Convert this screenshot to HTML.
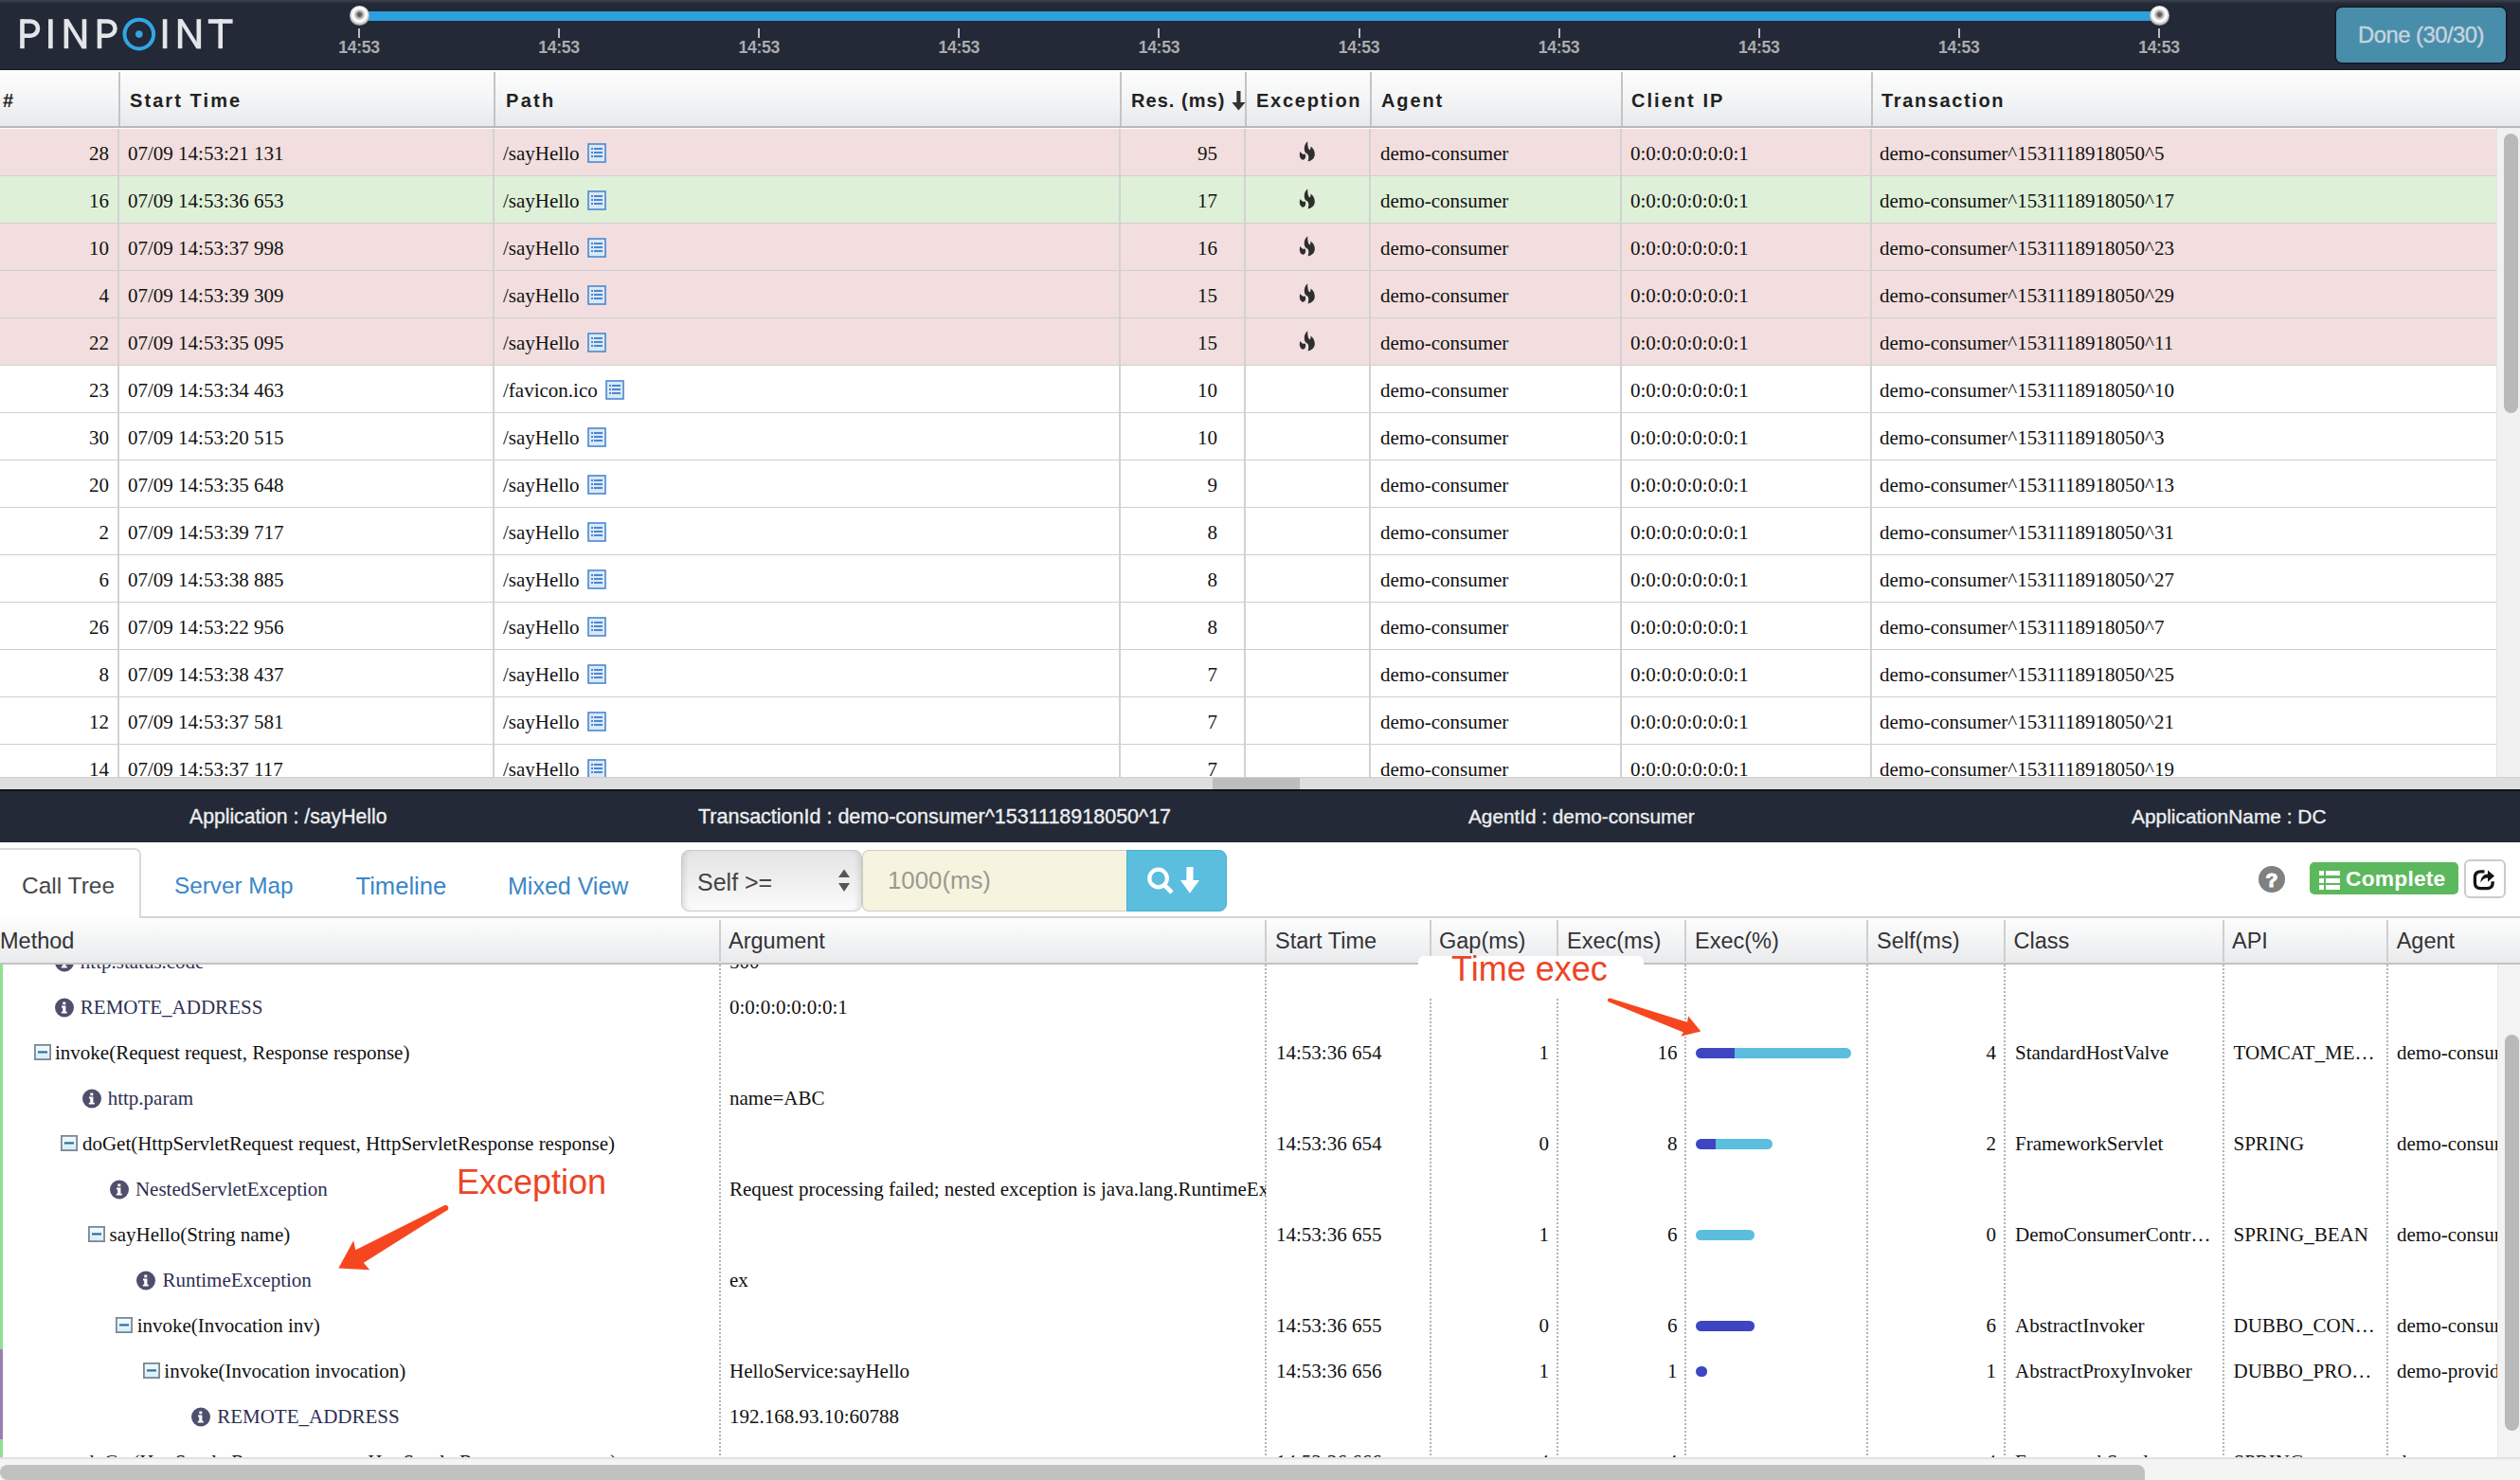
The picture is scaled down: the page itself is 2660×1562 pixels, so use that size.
<!DOCTYPE html><html><head><meta charset="utf-8"><style>

*{margin:0;padding:0;box-sizing:border-box}
html,body{width:2660px;height:1562px;overflow:hidden;background:#fff}
body{position:relative;font-family:"Liberation Sans",sans-serif}
.abs{position:absolute}
.top{left:0;top:0;width:2660px;height:74px;background:#232936;border-bottom:1px solid #151922}
.tick{position:absolute;top:30px;width:2px;height:10px;background:#b9bcc2}
.tlab{position:absolute;top:40.3px;width:80px;margin-left:-40px;text-align:center;color:#a9abae;font-weight:700;font-size:17.6px;letter-spacing:-0.3px}
.handle{position:absolute;top:5.5px;width:21px;height:21px;border-radius:50%;background:radial-gradient(circle at 50% 45%,#555 0,#666 2px,#aaa 3.5px,#f4f4f4 6px,#fff 7.5px,#ddd 9px,#aaa 10.5px)}
.th{position:absolute;top:74px;height:61px;left:0;width:2660px;background:linear-gradient(#fdfdfd 0%,#f4f5f6 50%,#e8e9eb 100%);border-bottom:2px solid #b8b8b8}
.thc{position:absolute;top:3px;height:59px;line-height:59px;font-weight:700;font-size:20px;color:#222;letter-spacing:1.9px}
.thsep{position:absolute;top:2px;height:57px;width:2px;background:#c4c4c4}
.row{position:absolute;left:0;width:2635px;height:50px;border-bottom:1.5px solid #cfcfcf;font-family:"Liberation Serif",serif;font-size:21px;color:#111}
.cell{position:absolute;top:0;height:50px;line-height:52px;white-space:nowrap}
.vsep{position:absolute;top:0;height:50px;width:1.5px;background:#d2d2d2}
.pink{background:#f2dede}
.green{background:#dff0d8}

</style></head><body>
<div class="abs top">
<div class="abs" style="left:0;top:0;width:2660px;height:4px;background:linear-gradient(#3a3f4b,#232936)"></div>
<svg class="abs" style="left:0;top:0" width="260" height="74" viewBox="0 0 260 74">
<g fill="#e4e5e8">
<rect x="21.2" y="20.2" width="4.6" height="31"/>
<rect x="51.1" y="20.2" width="4.6" height="31"/>
<rect x="67.6" y="20.2" width="4.6" height="31"/><rect x="86.7" y="20.2" width="4.6" height="31"/><polygon points="67.6,20.2 72.4,20.2 91.3,51.2 86.5,51.2"/>
<rect x="102.7" y="20.2" width="4.6" height="31"/>
<rect x="171.8" y="20.2" width="4.6" height="31"/>
<rect x="187.8" y="20.2" width="4.6" height="31"/><rect x="207.5" y="20.2" width="4.6" height="31"/><polygon points="187.8,20.2 192.6,20.2 212.1,51.2 207.3,51.2"/>
<rect x="219.8" y="20.2" width="25.8" height="4.6"/><rect x="230.4" y="20.2" width="4.6" height="31"/>
</g>
<g fill="none" stroke="#e4e5e8" stroke-width="4.6">
<path d="M23.5 22.5 H32.4 A7.6 7.6 0 0 1 32.4 37.7 H23.5"/>
<path d="M105 22.5 H113.9 A7.6 7.6 0 0 1 113.9 37.7 H105"/>
</g>
<circle cx="146.8" cy="36.1" r="15.3" fill="none" stroke="#2fa7e4" stroke-width="4"/>
<circle cx="146.8" cy="36.1" r="3.8" fill="#2fa7e4"/>
</svg>
<div class="abs" style="left:379px;top:12px;width:1900px;height:10px;background:#2d9fdc"></div>
<div class="tick" style="left:378.0px"></div><div class="tlab" style="left:379.0px">14:53</div>
<div class="tick" style="left:589.1px"></div><div class="tlab" style="left:590.1px">14:53</div>
<div class="tick" style="left:800.2px"></div><div class="tlab" style="left:801.2px">14:53</div>
<div class="tick" style="left:1011.3px"></div><div class="tlab" style="left:1012.3px">14:53</div>
<div class="tick" style="left:1222.4px"></div><div class="tlab" style="left:1223.4px">14:53</div>
<div class="tick" style="left:1433.5px"></div><div class="tlab" style="left:1434.5px">14:53</div>
<div class="tick" style="left:1644.6px"></div><div class="tlab" style="left:1645.6px">14:53</div>
<div class="tick" style="left:1855.7px"></div><div class="tlab" style="left:1856.7px">14:53</div>
<div class="tick" style="left:2066.8px"></div><div class="tlab" style="left:2067.8px">14:53</div>
<div class="tick" style="left:2277.9px"></div><div class="tlab" style="left:2278.9px">14:53</div>
<div class="handle" style="left:369px"></div>
<div class="handle" style="left:2269px"></div>
<div class="abs" style="left:2466px;top:7.5px;width:179px;height:58px;border-radius:6px;background:#488eab;box-shadow:0 0 0 1.5px #131926;color:#c6d3de;font-size:23.8px;text-align:center;line-height:57px;letter-spacing:-0.5px;-webkit-text-stroke:0.4px #c6d3de">Done (30/30)</div>
</div>
<div class="th">
<div class="thc" style="left:3px;letter-spacing:0px">#</div>
<div class="thc" style="left:137px;letter-spacing:2.08px">Start Time</div>
<div class="thc" style="left:534px;letter-spacing:2.33px">Path</div>
<div class="thc" style="left:1194px;letter-spacing:1.05px">Res. (ms)</div>
<div class="thc" style="left:1326px;letter-spacing:1.75px">Exception</div>
<div class="thc" style="left:1458px;letter-spacing:1.9px">Agent</div>
<div class="thc" style="left:1722px;letter-spacing:2.04px">Client IP</div>
<div class="thc" style="left:1986px;letter-spacing:1.63px">Transaction</div>
<div class="thsep" style="left:125px"></div>
<div class="thsep" style="left:521px"></div>
<div class="thsep" style="left:1182px"></div>
<div class="thsep" style="left:1314px"></div>
<div class="thsep" style="left:1446px"></div>
<div class="thsep" style="left:1711px"></div>
<div class="thsep" style="left:1975px"></div>
<svg class="abs" style="left:1300px;top:22px" width="15" height="21" viewBox="0 0 15 21"><path d="M5.3 0 H9.5 V12 H14.5 L7.4 20.5 L0.3 12 H5.3 Z" fill="#333"/></svg>
</div>
<div class="abs" style="left:0;top:136px;width:2660px;height:684px;overflow:hidden">
<div class="row pink" style="top:0px">
<div class="cell" style="right:2520px">28</div>
<div class="cell" style="left:135px">07/09 14:53:21 131</div>
<div class="cell" style="left:531px">/sayHello</div>
<svg width="20" height="21" viewBox="0 0 20 21" style="position:absolute;top:15px;left:620px"><rect x="1" y="1" width="18" height="19" fill="#dbe8f7" stroke="#4a88cf" stroke-width="1.6"/><g fill="#4a88cf"><rect x="4" y="5" width="2" height="2"/><rect x="7" y="5" width="9" height="2"/><rect x="4" y="9" width="2" height="2"/><rect x="7" y="9" width="9" height="2"/><rect x="4" y="13" width="2" height="2"/><rect x="7" y="13" width="9" height="2"/></g></svg>
<div class="cell" style="right:1350px">95</div>
<svg width="18" height="22" viewBox="0 0 18 22" style="position:absolute;top:13px;left:1370.8px"><path fill="#2e2e2e" d="M1.4 11 C0.4 13.5 0.6 17 2.4 18.8 C3.8 20.1 5.6 19.9 6.6 18.3 C7.4 16.9 7.3 15 6.7 13.6 C5.6 14.1 4.1 13.8 3.2 12.9 C2.5 12.3 1.9 11.7 1.4 11 Z"/><path fill="#2e2e2e" d="M9.3 0.3 C6.2 2.8 5.2 6.5 6 10 C6.6 12.2 7.9 12.8 9 13.5 C10.3 14.5 10.9 17 9.6 21.4 C13.6 20.8 16.6 18 16.8 14 C17 10.3 15.1 7.3 12.4 5.4 C12.7 7.3 12.3 8.6 11.3 9.4 C9.6 7.6 9 4 9.3 0.3 Z"/></svg>
<div class="cell" style="left:1457px">demo-consumer</div>
<div class="cell" style="left:1721px">0:0:0:0:0:0:0:1</div>
<div class="cell" style="left:1984px">demo-consumer^1531118918050^5</div>
<div class="vsep" style="left:124.3px"></div>
<div class="vsep" style="left:520.3px"></div>
<div class="vsep" style="left:1181.3px"></div>
<div class="vsep" style="left:1313.3px"></div>
<div class="vsep" style="left:1445.3px"></div>
<div class="vsep" style="left:1710.3px"></div>
<div class="vsep" style="left:1974.3px"></div>
</div>
<div class="row green" style="top:50px">
<div class="cell" style="right:2520px">16</div>
<div class="cell" style="left:135px">07/09 14:53:36 653</div>
<div class="cell" style="left:531px">/sayHello</div>
<svg width="20" height="21" viewBox="0 0 20 21" style="position:absolute;top:15px;left:620px"><rect x="1" y="1" width="18" height="19" fill="#dbe8f7" stroke="#4a88cf" stroke-width="1.6"/><g fill="#4a88cf"><rect x="4" y="5" width="2" height="2"/><rect x="7" y="5" width="9" height="2"/><rect x="4" y="9" width="2" height="2"/><rect x="7" y="9" width="9" height="2"/><rect x="4" y="13" width="2" height="2"/><rect x="7" y="13" width="9" height="2"/></g></svg>
<div class="cell" style="right:1350px">17</div>
<svg width="18" height="22" viewBox="0 0 18 22" style="position:absolute;top:13px;left:1370.8px"><path fill="#2e2e2e" d="M1.4 11 C0.4 13.5 0.6 17 2.4 18.8 C3.8 20.1 5.6 19.9 6.6 18.3 C7.4 16.9 7.3 15 6.7 13.6 C5.6 14.1 4.1 13.8 3.2 12.9 C2.5 12.3 1.9 11.7 1.4 11 Z"/><path fill="#2e2e2e" d="M9.3 0.3 C6.2 2.8 5.2 6.5 6 10 C6.6 12.2 7.9 12.8 9 13.5 C10.3 14.5 10.9 17 9.6 21.4 C13.6 20.8 16.6 18 16.8 14 C17 10.3 15.1 7.3 12.4 5.4 C12.7 7.3 12.3 8.6 11.3 9.4 C9.6 7.6 9 4 9.3 0.3 Z"/></svg>
<div class="cell" style="left:1457px">demo-consumer</div>
<div class="cell" style="left:1721px">0:0:0:0:0:0:0:1</div>
<div class="cell" style="left:1984px">demo-consumer^1531118918050^17</div>
<div class="vsep" style="left:124.3px"></div>
<div class="vsep" style="left:520.3px"></div>
<div class="vsep" style="left:1181.3px"></div>
<div class="vsep" style="left:1313.3px"></div>
<div class="vsep" style="left:1445.3px"></div>
<div class="vsep" style="left:1710.3px"></div>
<div class="vsep" style="left:1974.3px"></div>
</div>
<div class="row pink" style="top:100px">
<div class="cell" style="right:2520px">10</div>
<div class="cell" style="left:135px">07/09 14:53:37 998</div>
<div class="cell" style="left:531px">/sayHello</div>
<svg width="20" height="21" viewBox="0 0 20 21" style="position:absolute;top:15px;left:620px"><rect x="1" y="1" width="18" height="19" fill="#dbe8f7" stroke="#4a88cf" stroke-width="1.6"/><g fill="#4a88cf"><rect x="4" y="5" width="2" height="2"/><rect x="7" y="5" width="9" height="2"/><rect x="4" y="9" width="2" height="2"/><rect x="7" y="9" width="9" height="2"/><rect x="4" y="13" width="2" height="2"/><rect x="7" y="13" width="9" height="2"/></g></svg>
<div class="cell" style="right:1350px">16</div>
<svg width="18" height="22" viewBox="0 0 18 22" style="position:absolute;top:13px;left:1370.8px"><path fill="#2e2e2e" d="M1.4 11 C0.4 13.5 0.6 17 2.4 18.8 C3.8 20.1 5.6 19.9 6.6 18.3 C7.4 16.9 7.3 15 6.7 13.6 C5.6 14.1 4.1 13.8 3.2 12.9 C2.5 12.3 1.9 11.7 1.4 11 Z"/><path fill="#2e2e2e" d="M9.3 0.3 C6.2 2.8 5.2 6.5 6 10 C6.6 12.2 7.9 12.8 9 13.5 C10.3 14.5 10.9 17 9.6 21.4 C13.6 20.8 16.6 18 16.8 14 C17 10.3 15.1 7.3 12.4 5.4 C12.7 7.3 12.3 8.6 11.3 9.4 C9.6 7.6 9 4 9.3 0.3 Z"/></svg>
<div class="cell" style="left:1457px">demo-consumer</div>
<div class="cell" style="left:1721px">0:0:0:0:0:0:0:1</div>
<div class="cell" style="left:1984px">demo-consumer^1531118918050^23</div>
<div class="vsep" style="left:124.3px"></div>
<div class="vsep" style="left:520.3px"></div>
<div class="vsep" style="left:1181.3px"></div>
<div class="vsep" style="left:1313.3px"></div>
<div class="vsep" style="left:1445.3px"></div>
<div class="vsep" style="left:1710.3px"></div>
<div class="vsep" style="left:1974.3px"></div>
</div>
<div class="row pink" style="top:150px">
<div class="cell" style="right:2520px">4</div>
<div class="cell" style="left:135px">07/09 14:53:39 309</div>
<div class="cell" style="left:531px">/sayHello</div>
<svg width="20" height="21" viewBox="0 0 20 21" style="position:absolute;top:15px;left:620px"><rect x="1" y="1" width="18" height="19" fill="#dbe8f7" stroke="#4a88cf" stroke-width="1.6"/><g fill="#4a88cf"><rect x="4" y="5" width="2" height="2"/><rect x="7" y="5" width="9" height="2"/><rect x="4" y="9" width="2" height="2"/><rect x="7" y="9" width="9" height="2"/><rect x="4" y="13" width="2" height="2"/><rect x="7" y="13" width="9" height="2"/></g></svg>
<div class="cell" style="right:1350px">15</div>
<svg width="18" height="22" viewBox="0 0 18 22" style="position:absolute;top:13px;left:1370.8px"><path fill="#2e2e2e" d="M1.4 11 C0.4 13.5 0.6 17 2.4 18.8 C3.8 20.1 5.6 19.9 6.6 18.3 C7.4 16.9 7.3 15 6.7 13.6 C5.6 14.1 4.1 13.8 3.2 12.9 C2.5 12.3 1.9 11.7 1.4 11 Z"/><path fill="#2e2e2e" d="M9.3 0.3 C6.2 2.8 5.2 6.5 6 10 C6.6 12.2 7.9 12.8 9 13.5 C10.3 14.5 10.9 17 9.6 21.4 C13.6 20.8 16.6 18 16.8 14 C17 10.3 15.1 7.3 12.4 5.4 C12.7 7.3 12.3 8.6 11.3 9.4 C9.6 7.6 9 4 9.3 0.3 Z"/></svg>
<div class="cell" style="left:1457px">demo-consumer</div>
<div class="cell" style="left:1721px">0:0:0:0:0:0:0:1</div>
<div class="cell" style="left:1984px">demo-consumer^1531118918050^29</div>
<div class="vsep" style="left:124.3px"></div>
<div class="vsep" style="left:520.3px"></div>
<div class="vsep" style="left:1181.3px"></div>
<div class="vsep" style="left:1313.3px"></div>
<div class="vsep" style="left:1445.3px"></div>
<div class="vsep" style="left:1710.3px"></div>
<div class="vsep" style="left:1974.3px"></div>
</div>
<div class="row pink" style="top:200px">
<div class="cell" style="right:2520px">22</div>
<div class="cell" style="left:135px">07/09 14:53:35 095</div>
<div class="cell" style="left:531px">/sayHello</div>
<svg width="20" height="21" viewBox="0 0 20 21" style="position:absolute;top:15px;left:620px"><rect x="1" y="1" width="18" height="19" fill="#dbe8f7" stroke="#4a88cf" stroke-width="1.6"/><g fill="#4a88cf"><rect x="4" y="5" width="2" height="2"/><rect x="7" y="5" width="9" height="2"/><rect x="4" y="9" width="2" height="2"/><rect x="7" y="9" width="9" height="2"/><rect x="4" y="13" width="2" height="2"/><rect x="7" y="13" width="9" height="2"/></g></svg>
<div class="cell" style="right:1350px">15</div>
<svg width="18" height="22" viewBox="0 0 18 22" style="position:absolute;top:13px;left:1370.8px"><path fill="#2e2e2e" d="M1.4 11 C0.4 13.5 0.6 17 2.4 18.8 C3.8 20.1 5.6 19.9 6.6 18.3 C7.4 16.9 7.3 15 6.7 13.6 C5.6 14.1 4.1 13.8 3.2 12.9 C2.5 12.3 1.9 11.7 1.4 11 Z"/><path fill="#2e2e2e" d="M9.3 0.3 C6.2 2.8 5.2 6.5 6 10 C6.6 12.2 7.9 12.8 9 13.5 C10.3 14.5 10.9 17 9.6 21.4 C13.6 20.8 16.6 18 16.8 14 C17 10.3 15.1 7.3 12.4 5.4 C12.7 7.3 12.3 8.6 11.3 9.4 C9.6 7.6 9 4 9.3 0.3 Z"/></svg>
<div class="cell" style="left:1457px">demo-consumer</div>
<div class="cell" style="left:1721px">0:0:0:0:0:0:0:1</div>
<div class="cell" style="left:1984px">demo-consumer^1531118918050^11</div>
<div class="vsep" style="left:124.3px"></div>
<div class="vsep" style="left:520.3px"></div>
<div class="vsep" style="left:1181.3px"></div>
<div class="vsep" style="left:1313.3px"></div>
<div class="vsep" style="left:1445.3px"></div>
<div class="vsep" style="left:1710.3px"></div>
<div class="vsep" style="left:1974.3px"></div>
</div>
<div class="row " style="top:250px">
<div class="cell" style="right:2520px">23</div>
<div class="cell" style="left:135px">07/09 14:53:34 463</div>
<div class="cell" style="left:531px">/favicon.ico</div>
<svg width="20" height="21" viewBox="0 0 20 21" style="position:absolute;top:15px;left:639px"><rect x="1" y="1" width="18" height="19" fill="#dbe8f7" stroke="#4a88cf" stroke-width="1.6"/><g fill="#4a88cf"><rect x="4" y="5" width="2" height="2"/><rect x="7" y="5" width="9" height="2"/><rect x="4" y="9" width="2" height="2"/><rect x="7" y="9" width="9" height="2"/><rect x="4" y="13" width="2" height="2"/><rect x="7" y="13" width="9" height="2"/></g></svg>
<div class="cell" style="right:1350px">10</div>
<div class="cell" style="left:1457px">demo-consumer</div>
<div class="cell" style="left:1721px">0:0:0:0:0:0:0:1</div>
<div class="cell" style="left:1984px">demo-consumer^1531118918050^10</div>
<div class="vsep" style="left:124.3px"></div>
<div class="vsep" style="left:520.3px"></div>
<div class="vsep" style="left:1181.3px"></div>
<div class="vsep" style="left:1313.3px"></div>
<div class="vsep" style="left:1445.3px"></div>
<div class="vsep" style="left:1710.3px"></div>
<div class="vsep" style="left:1974.3px"></div>
</div>
<div class="row " style="top:300px">
<div class="cell" style="right:2520px">30</div>
<div class="cell" style="left:135px">07/09 14:53:20 515</div>
<div class="cell" style="left:531px">/sayHello</div>
<svg width="20" height="21" viewBox="0 0 20 21" style="position:absolute;top:15px;left:620px"><rect x="1" y="1" width="18" height="19" fill="#dbe8f7" stroke="#4a88cf" stroke-width="1.6"/><g fill="#4a88cf"><rect x="4" y="5" width="2" height="2"/><rect x="7" y="5" width="9" height="2"/><rect x="4" y="9" width="2" height="2"/><rect x="7" y="9" width="9" height="2"/><rect x="4" y="13" width="2" height="2"/><rect x="7" y="13" width="9" height="2"/></g></svg>
<div class="cell" style="right:1350px">10</div>
<div class="cell" style="left:1457px">demo-consumer</div>
<div class="cell" style="left:1721px">0:0:0:0:0:0:0:1</div>
<div class="cell" style="left:1984px">demo-consumer^1531118918050^3</div>
<div class="vsep" style="left:124.3px"></div>
<div class="vsep" style="left:520.3px"></div>
<div class="vsep" style="left:1181.3px"></div>
<div class="vsep" style="left:1313.3px"></div>
<div class="vsep" style="left:1445.3px"></div>
<div class="vsep" style="left:1710.3px"></div>
<div class="vsep" style="left:1974.3px"></div>
</div>
<div class="row " style="top:350px">
<div class="cell" style="right:2520px">20</div>
<div class="cell" style="left:135px">07/09 14:53:35 648</div>
<div class="cell" style="left:531px">/sayHello</div>
<svg width="20" height="21" viewBox="0 0 20 21" style="position:absolute;top:15px;left:620px"><rect x="1" y="1" width="18" height="19" fill="#dbe8f7" stroke="#4a88cf" stroke-width="1.6"/><g fill="#4a88cf"><rect x="4" y="5" width="2" height="2"/><rect x="7" y="5" width="9" height="2"/><rect x="4" y="9" width="2" height="2"/><rect x="7" y="9" width="9" height="2"/><rect x="4" y="13" width="2" height="2"/><rect x="7" y="13" width="9" height="2"/></g></svg>
<div class="cell" style="right:1350px">9</div>
<div class="cell" style="left:1457px">demo-consumer</div>
<div class="cell" style="left:1721px">0:0:0:0:0:0:0:1</div>
<div class="cell" style="left:1984px">demo-consumer^1531118918050^13</div>
<div class="vsep" style="left:124.3px"></div>
<div class="vsep" style="left:520.3px"></div>
<div class="vsep" style="left:1181.3px"></div>
<div class="vsep" style="left:1313.3px"></div>
<div class="vsep" style="left:1445.3px"></div>
<div class="vsep" style="left:1710.3px"></div>
<div class="vsep" style="left:1974.3px"></div>
</div>
<div class="row " style="top:400px">
<div class="cell" style="right:2520px">2</div>
<div class="cell" style="left:135px">07/09 14:53:39 717</div>
<div class="cell" style="left:531px">/sayHello</div>
<svg width="20" height="21" viewBox="0 0 20 21" style="position:absolute;top:15px;left:620px"><rect x="1" y="1" width="18" height="19" fill="#dbe8f7" stroke="#4a88cf" stroke-width="1.6"/><g fill="#4a88cf"><rect x="4" y="5" width="2" height="2"/><rect x="7" y="5" width="9" height="2"/><rect x="4" y="9" width="2" height="2"/><rect x="7" y="9" width="9" height="2"/><rect x="4" y="13" width="2" height="2"/><rect x="7" y="13" width="9" height="2"/></g></svg>
<div class="cell" style="right:1350px">8</div>
<div class="cell" style="left:1457px">demo-consumer</div>
<div class="cell" style="left:1721px">0:0:0:0:0:0:0:1</div>
<div class="cell" style="left:1984px">demo-consumer^1531118918050^31</div>
<div class="vsep" style="left:124.3px"></div>
<div class="vsep" style="left:520.3px"></div>
<div class="vsep" style="left:1181.3px"></div>
<div class="vsep" style="left:1313.3px"></div>
<div class="vsep" style="left:1445.3px"></div>
<div class="vsep" style="left:1710.3px"></div>
<div class="vsep" style="left:1974.3px"></div>
</div>
<div class="row " style="top:450px">
<div class="cell" style="right:2520px">6</div>
<div class="cell" style="left:135px">07/09 14:53:38 885</div>
<div class="cell" style="left:531px">/sayHello</div>
<svg width="20" height="21" viewBox="0 0 20 21" style="position:absolute;top:15px;left:620px"><rect x="1" y="1" width="18" height="19" fill="#dbe8f7" stroke="#4a88cf" stroke-width="1.6"/><g fill="#4a88cf"><rect x="4" y="5" width="2" height="2"/><rect x="7" y="5" width="9" height="2"/><rect x="4" y="9" width="2" height="2"/><rect x="7" y="9" width="9" height="2"/><rect x="4" y="13" width="2" height="2"/><rect x="7" y="13" width="9" height="2"/></g></svg>
<div class="cell" style="right:1350px">8</div>
<div class="cell" style="left:1457px">demo-consumer</div>
<div class="cell" style="left:1721px">0:0:0:0:0:0:0:1</div>
<div class="cell" style="left:1984px">demo-consumer^1531118918050^27</div>
<div class="vsep" style="left:124.3px"></div>
<div class="vsep" style="left:520.3px"></div>
<div class="vsep" style="left:1181.3px"></div>
<div class="vsep" style="left:1313.3px"></div>
<div class="vsep" style="left:1445.3px"></div>
<div class="vsep" style="left:1710.3px"></div>
<div class="vsep" style="left:1974.3px"></div>
</div>
<div class="row " style="top:500px">
<div class="cell" style="right:2520px">26</div>
<div class="cell" style="left:135px">07/09 14:53:22 956</div>
<div class="cell" style="left:531px">/sayHello</div>
<svg width="20" height="21" viewBox="0 0 20 21" style="position:absolute;top:15px;left:620px"><rect x="1" y="1" width="18" height="19" fill="#dbe8f7" stroke="#4a88cf" stroke-width="1.6"/><g fill="#4a88cf"><rect x="4" y="5" width="2" height="2"/><rect x="7" y="5" width="9" height="2"/><rect x="4" y="9" width="2" height="2"/><rect x="7" y="9" width="9" height="2"/><rect x="4" y="13" width="2" height="2"/><rect x="7" y="13" width="9" height="2"/></g></svg>
<div class="cell" style="right:1350px">8</div>
<div class="cell" style="left:1457px">demo-consumer</div>
<div class="cell" style="left:1721px">0:0:0:0:0:0:0:1</div>
<div class="cell" style="left:1984px">demo-consumer^1531118918050^7</div>
<div class="vsep" style="left:124.3px"></div>
<div class="vsep" style="left:520.3px"></div>
<div class="vsep" style="left:1181.3px"></div>
<div class="vsep" style="left:1313.3px"></div>
<div class="vsep" style="left:1445.3px"></div>
<div class="vsep" style="left:1710.3px"></div>
<div class="vsep" style="left:1974.3px"></div>
</div>
<div class="row " style="top:550px">
<div class="cell" style="right:2520px">8</div>
<div class="cell" style="left:135px">07/09 14:53:38 437</div>
<div class="cell" style="left:531px">/sayHello</div>
<svg width="20" height="21" viewBox="0 0 20 21" style="position:absolute;top:15px;left:620px"><rect x="1" y="1" width="18" height="19" fill="#dbe8f7" stroke="#4a88cf" stroke-width="1.6"/><g fill="#4a88cf"><rect x="4" y="5" width="2" height="2"/><rect x="7" y="5" width="9" height="2"/><rect x="4" y="9" width="2" height="2"/><rect x="7" y="9" width="9" height="2"/><rect x="4" y="13" width="2" height="2"/><rect x="7" y="13" width="9" height="2"/></g></svg>
<div class="cell" style="right:1350px">7</div>
<div class="cell" style="left:1457px">demo-consumer</div>
<div class="cell" style="left:1721px">0:0:0:0:0:0:0:1</div>
<div class="cell" style="left:1984px">demo-consumer^1531118918050^25</div>
<div class="vsep" style="left:124.3px"></div>
<div class="vsep" style="left:520.3px"></div>
<div class="vsep" style="left:1181.3px"></div>
<div class="vsep" style="left:1313.3px"></div>
<div class="vsep" style="left:1445.3px"></div>
<div class="vsep" style="left:1710.3px"></div>
<div class="vsep" style="left:1974.3px"></div>
</div>
<div class="row " style="top:600px">
<div class="cell" style="right:2520px">12</div>
<div class="cell" style="left:135px">07/09 14:53:37 581</div>
<div class="cell" style="left:531px">/sayHello</div>
<svg width="20" height="21" viewBox="0 0 20 21" style="position:absolute;top:15px;left:620px"><rect x="1" y="1" width="18" height="19" fill="#dbe8f7" stroke="#4a88cf" stroke-width="1.6"/><g fill="#4a88cf"><rect x="4" y="5" width="2" height="2"/><rect x="7" y="5" width="9" height="2"/><rect x="4" y="9" width="2" height="2"/><rect x="7" y="9" width="9" height="2"/><rect x="4" y="13" width="2" height="2"/><rect x="7" y="13" width="9" height="2"/></g></svg>
<div class="cell" style="right:1350px">7</div>
<div class="cell" style="left:1457px">demo-consumer</div>
<div class="cell" style="left:1721px">0:0:0:0:0:0:0:1</div>
<div class="cell" style="left:1984px">demo-consumer^1531118918050^21</div>
<div class="vsep" style="left:124.3px"></div>
<div class="vsep" style="left:520.3px"></div>
<div class="vsep" style="left:1181.3px"></div>
<div class="vsep" style="left:1313.3px"></div>
<div class="vsep" style="left:1445.3px"></div>
<div class="vsep" style="left:1710.3px"></div>
<div class="vsep" style="left:1974.3px"></div>
</div>
<div class="row " style="top:650px">
<div class="cell" style="right:2520px">14</div>
<div class="cell" style="left:135px">07/09 14:53:37 117</div>
<div class="cell" style="left:531px">/sayHello</div>
<svg width="20" height="21" viewBox="0 0 20 21" style="position:absolute;top:15px;left:620px"><rect x="1" y="1" width="18" height="19" fill="#dbe8f7" stroke="#4a88cf" stroke-width="1.6"/><g fill="#4a88cf"><rect x="4" y="5" width="2" height="2"/><rect x="7" y="5" width="9" height="2"/><rect x="4" y="9" width="2" height="2"/><rect x="7" y="9" width="9" height="2"/><rect x="4" y="13" width="2" height="2"/><rect x="7" y="13" width="9" height="2"/></g></svg>
<div class="cell" style="right:1350px">7</div>
<div class="cell" style="left:1457px">demo-consumer</div>
<div class="cell" style="left:1721px">0:0:0:0:0:0:0:1</div>
<div class="cell" style="left:1984px">demo-consumer^1531118918050^19</div>
<div class="vsep" style="left:124.3px"></div>
<div class="vsep" style="left:520.3px"></div>
<div class="vsep" style="left:1181.3px"></div>
<div class="vsep" style="left:1313.3px"></div>
<div class="vsep" style="left:1445.3px"></div>
<div class="vsep" style="left:1710.3px"></div>
<div class="vsep" style="left:1974.3px"></div>
</div>
</div>
<div class="abs" style="left:2635px;top:135px;width:25px;height:685px;background:#f1f1f1;border-left:1px solid #e4e4e4"></div>
<div class="abs" style="left:2643px;top:141px;width:15px;height:295px;border-radius:8px;background:#b9b9b9"></div>
<div class="abs" style="left:0;top:820px;width:2660px;height:13px;background:#dedede;border-top:1px solid #cfcfcf"></div>
<div class="abs" style="left:1280px;top:821px;width:92px;height:12px;background:#bdbdbd"></div>
<div class="abs" style="left:0;top:833px;width:2660px;height:56px;background:#232936;border-top:2px solid #0e1117;color:#eceef0;font-size:21.5px;line-height:54px;white-space:nowrap;-webkit-text-stroke:0.35px #eceef0">
<div class="abs" style="left:200px;top:0;font-size:21.2px">Application : /sayHello</div>
<div class="abs" style="left:737px;top:0;font-size:21.5px">TransactionId : demo-consumer^1531118918050^17</div>
<div class="abs" style="left:1550px;top:0;font-size:20.75px">AgentId : demo-consumer</div>
<div class="abs" style="left:2250px;top:0;font-size:20.9px">ApplicationName : DC</div>
</div>
<div class="abs" style="left:0;top:889px;width:2660px;height:80px;background:#fff"></div>
<div class="abs" style="left:147px;top:967px;width:2513px;height:2px;background:#d5d5d5"></div>
<div class="abs" style="left:-3px;top:895px;width:152px;height:76px;border:2px solid #d9d9d9;border-bottom:none;border-radius:0 7px 0 0;background:#fff"></div>
<div class="abs" style="left:23px;top:898px;line-height:74px;font-size:24.5px;color:#474747">Call Tree</div>
<div class="abs" style="left:184px;top:898px;line-height:74px;font-size:24.3px;color:#3a87c8">Server Map</div>
<div class="abs" style="left:375.5px;top:898px;line-height:74px;font-size:25.6px;color:#3a87c8">Timeline</div>
<div class="abs" style="left:536px;top:898px;line-height:74px;font-size:25px;color:#3a87c8">Mixed View</div>
<div class="abs" style="left:719px;top:897px;width:191px;height:65px;border:1.5px solid #c9c9c9;border-radius:8px;background:linear-gradient(#e4e4e4,#f0f0f0 55%,#fbfbfb);box-shadow:inset 6px 0 6px -4px rgba(0,0,0,0.12),inset -6px 0 6px -4px rgba(0,0,0,0.12)"></div>
<div class="abs" style="left:736px;top:899px;line-height:64px;font-size:25px;color:#444">Self &gt;=</div>
<svg class="abs" style="left:884px;top:916px" width="14" height="26" viewBox="0 0 14 26"><path d="M7 1.5 L13 10 H1 Z M1 16 H13 L7 25 Z" fill="#555"/></svg>
<div class="abs" style="left:910px;top:897px;width:282px;height:65px;border:1.5px solid #cdcdc3;border-right:none;border-radius:7px 0 0 7px;background:#f6f4de"></div>
<div class="abs" style="left:937px;top:897px;line-height:64px;font-size:25.8px;color:#9a9a92">1000(ms)</div>
<div class="abs" style="left:1189px;top:897px;width:106px;height:65px;border:1.5px solid #46b0d2;border-radius:0 8px 8px 0;background:#5bbede"></div>
<svg class="abs" style="left:1189px;top:897px" width="106" height="65" viewBox="0 0 106 65"><circle cx="33.6" cy="30" r="9.3" fill="none" stroke="#fff" stroke-width="4.2"/><path d="M40 37 L48 45" stroke="#fff" stroke-width="4.6" stroke-linecap="butt"/><path d="M63.4 18 H70.5 V32 H77 L66.9 45.7 L57 32 H63.4 Z" fill="#fff"/></svg>
<div class="abs" style="left:2384px;top:914px;width:28px;height:28px;border-radius:50%;background:#808080"></div>
<div class="abs" style="left:2384px;top:914px;width:28px;height:28px;line-height:29px;text-align:center;color:#fff;font-weight:700;font-size:21px;-webkit-text-stroke:1.2px #fff">?</div>
<div class="abs" style="left:2438px;top:910px;width:157px;height:34px;border-radius:5px;background:#5cb85c"></div>
<svg class="abs" style="left:2448px;top:919px" width="22" height="21" viewBox="0 0 22 21"><g fill="#fff"><rect x="0" y="0" width="5" height="5"/><rect x="7" y="0" width="15" height="5"/><rect x="0" y="8" width="5" height="5"/><rect x="7" y="8" width="15" height="5"/><rect x="0" y="15" width="5" height="5"/><rect x="7" y="15" width="15" height="5"/></g></svg>
<div class="abs" style="left:2476px;top:910px;line-height:35px;font-size:22.8px;font-weight:700;color:#fff;letter-spacing:0.2px">Complete</div>
<div class="abs" style="left:2601px;top:907px;width:44px;height:41px;border:2px solid #cbcbcb;border-radius:6px;background:#fff"></div>
<svg class="abs" style="left:2609px;top:915px" width="26" height="26" viewBox="0 0 26 26"><path d="M13.5 4.8 H9.6 C5.4 4.8 3.4 6.8 3.4 11 V16.4 C3.4 20.6 5.4 22.6 9.6 22.6 H16 C20.2 22.6 22.2 20.6 22.2 16.4 V15.2" fill="none" stroke="#141414" stroke-width="3.3"/><path d="M9.3 16.5 C9.8 10.5 13 7.6 17 7.6 V3.4 L24 9.6 L17 15.8 V11.6 C14 11.6 11.4 13 9.3 16.5 Z" fill="#141414"/></svg>
<div class="abs" style="left:0;top:969px;width:2660px;height:49px;background:linear-gradient(#fdfdfd 0%,#f3f4f5 50%,#e9eaec 100%);border-bottom:2px solid #c2c2c2;box-shadow:0 1.5px 1.5px rgba(0,0,0,0.12)"></div>
<div class="abs" style="left:0px;top:971px;line-height:45px;font-size:23.5px;color:#333">Method</div>
<div class="abs" style="left:769px;top:971px;line-height:45px;font-size:23.5px;color:#333">Argument</div>
<div class="abs" style="left:1346px;top:971px;line-height:45px;font-size:23.5px;color:#333">Start Time</div>
<div class="abs" style="left:1519px;top:971px;line-height:45px;font-size:23.5px;color:#333">Gap(ms)</div>
<div class="abs" style="left:1654px;top:971px;line-height:45px;font-size:23.5px;color:#333">Exec(ms)</div>
<div class="abs" style="left:1789px;top:971px;line-height:45px;font-size:23.5px;color:#333">Exec(%)</div>
<div class="abs" style="left:1981px;top:971px;line-height:45px;font-size:23.5px;color:#333">Self(ms)</div>
<div class="abs" style="left:2125.6px;top:971px;line-height:45px;font-size:23.5px;color:#333">Class</div>
<div class="abs" style="left:2356px;top:971px;line-height:45px;font-size:23.5px;color:#333">API</div>
<div class="abs" style="left:2529.7px;top:971px;line-height:45px;font-size:23.5px;color:#333">Agent</div>
<div class="abs" style="left:759px;top:971px;width:2px;height:44px;background:#cfcfcf"></div>
<div class="abs" style="left:1335px;top:971px;width:2px;height:44px;background:#cfcfcf"></div>
<div class="abs" style="left:1509px;top:971px;width:2px;height:44px;background:#cfcfcf"></div>
<div class="abs" style="left:1643px;top:971px;width:2px;height:44px;background:#cfcfcf"></div>
<div class="abs" style="left:1778px;top:971px;width:2px;height:44px;background:#cfcfcf"></div>
<div class="abs" style="left:1970px;top:971px;width:2px;height:44px;background:#cfcfcf"></div>
<div class="abs" style="left:2115px;top:971px;width:2px;height:44px;background:#cfcfcf"></div>
<div class="abs" style="left:2346px;top:971px;width:2px;height:44px;background:#cfcfcf"></div>
<div class="abs" style="left:2519px;top:971px;width:2px;height:44px;background:#cfcfcf"></div>
<div class="abs" style="left:0;top:1018px;width:2636px;height:520px;overflow:hidden;background:#fff">
<div class="abs" style="left:759px;top:0;width:1.6px;height:520px;background:repeating-linear-gradient(#b4b4b4 0 2px,transparent 2px 4px)"></div>
<div class="abs" style="left:1335px;top:0;width:1.6px;height:520px;background:repeating-linear-gradient(#b4b4b4 0 2px,transparent 2px 4px)"></div>
<div class="abs" style="left:1509px;top:0;width:1.6px;height:520px;background:repeating-linear-gradient(#b4b4b4 0 2px,transparent 2px 4px)"></div>
<div class="abs" style="left:1643px;top:0;width:1.6px;height:520px;background:repeating-linear-gradient(#b4b4b4 0 2px,transparent 2px 4px)"></div>
<div class="abs" style="left:1778px;top:0;width:1.6px;height:520px;background:repeating-linear-gradient(#b4b4b4 0 2px,transparent 2px 4px)"></div>
<div class="abs" style="left:1970px;top:0;width:1.6px;height:520px;background:repeating-linear-gradient(#b4b4b4 0 2px,transparent 2px 4px)"></div>
<div class="abs" style="left:2115px;top:0;width:1.6px;height:520px;background:repeating-linear-gradient(#b4b4b4 0 2px,transparent 2px 4px)"></div>
<div class="abs" style="left:2346px;top:0;width:1.6px;height:520px;background:repeating-linear-gradient(#b4b4b4 0 2px,transparent 2px 4px)"></div>
<div class="abs" style="left:2519px;top:0;width:1.6px;height:520px;background:repeating-linear-gradient(#b4b4b4 0 2px,transparent 2px 4px)"></div>
<div class="abs" style="left:0;top:0;width:3px;height:406px;background:#8fe08f"></div>
<div class="abs" style="left:0;top:406px;width:3px;height:95px;background:#9b7fb3"></div>
<div class="abs" style="left:0;top:501px;width:3px;height:19px;background:#8fe08f"></div>
<svg class="abs" style="left:57.8px;top:-13px" width="20" height="21" viewBox="0 0 20 21"><circle cx="10" cy="10.5" r="10" fill="#4d4f6c"/><path d="M8.3 4.6 h3 v2.6 h-3 z M7 8.6 h4.4 v6.2 h1.4 v1.8 h-6 v-1.8 h1.4 v-4.4 h-1.2 z" fill="#fff"/></svg>
<div class="abs" style="left:84.8px;top:-27px;line-height:48px;height:48px;font-family:'Liberation Serif', serif;font-size:21px;color:#2d2f52;white-space:nowrap">http.status.code</div>
<div class="abs" style="left:770px;width:566px;overflow:hidden;top:-27px;line-height:48px;height:48px;font-family:'Liberation Serif', serif;font-size:21px;color:#111;white-space:nowrap">500</div>
<svg class="abs" style="left:57.8px;top:35px" width="20" height="21" viewBox="0 0 20 21"><circle cx="10" cy="10.5" r="10" fill="#4d4f6c"/><path d="M8.3 4.6 h3 v2.6 h-3 z M7 8.6 h4.4 v6.2 h1.4 v1.8 h-6 v-1.8 h1.4 v-4.4 h-1.2 z" fill="#fff"/></svg>
<div class="abs" style="left:84.8px;top:21px;line-height:48px;height:48px;font-family:'Liberation Serif', serif;font-size:21px;color:#2d2f52;white-space:nowrap">REMOTE_ADDRESS</div>
<div class="abs" style="left:770px;width:566px;overflow:hidden;top:21px;line-height:48px;height:48px;font-family:'Liberation Serif', serif;font-size:21px;color:#111;white-space:nowrap">0:0:0:0:0:0:0:1</div>
<svg class="abs" style="left:35.5px;top:84px" width="18" height="17" viewBox="0 0 18 17"><defs><linearGradient id="mg" x1="0" y1="0" x2="0" y2="1"><stop offset="0" stop-color="#f4fbff"/><stop offset="1" stop-color="#d6ecf8"/></linearGradient></defs><rect x="0.9" y="0.9" width="16.2" height="15.2" fill="url(#mg)" stroke="#7b8894" stroke-width="1.8"/><rect x="4" y="7.3" width="10" height="2.2" fill="#2f6f9c"/></svg>
<div class="abs" style="left:58.0px;top:69px;line-height:48px;height:48px;font-family:'Liberation Serif', serif;font-size:21px;color:#111;white-space:nowrap">invoke(Request request, Response response)</div>
<div class="abs" style="left:1347px;top:69px;line-height:48px;height:48px;font-family:'Liberation Serif', serif;font-size:21px;color:#111;white-space:nowrap">14:53:36 654</div>
<div class="abs" style="right:1001px;top:69px;line-height:48px;height:48px;font-family:'Liberation Serif', serif;font-size:21px;color:#111;white-space:nowrap">1</div>
<div class="abs" style="right:865.5px;top:69px;line-height:48px;height:48px;font-family:'Liberation Serif', serif;font-size:21px;color:#111;white-space:nowrap">16</div>
<div class="abs" style="left:1790px;top:87.5px;width:164px;height:11.5px;border-radius:6px;background:#5bbede;overflow:hidden"><div style="width:41px;height:100%;background:#3f45c2;border-radius:6px 0 0 6px"></div></div>
<div class="abs" style="right:529px;top:69px;line-height:48px;height:48px;font-family:'Liberation Serif', serif;font-size:21px;color:#111;white-space:nowrap">4</div>
<div class="abs" style="left:2127px;top:69px;line-height:48px;height:48px;font-family:'Liberation Serif', serif;font-size:21px;color:#111;white-space:nowrap">StandardHostValve</div>
<div class="abs" style="left:2357.5px;top:69px;line-height:48px;height:48px;font-family:'Liberation Serif', serif;font-size:21px;color:#111;white-space:nowrap">TOMCAT_ME…</div>
<div class="abs" style="left:2530px;width:106px;overflow:hidden;top:69px;line-height:48px;height:48px;font-family:'Liberation Serif', serif;font-size:21px;color:#111;white-space:nowrap">demo-consumer</div>
<svg class="abs" style="left:86.7px;top:131px" width="20" height="21" viewBox="0 0 20 21"><circle cx="10" cy="10.5" r="10" fill="#4d4f6c"/><path d="M8.3 4.6 h3 v2.6 h-3 z M7 8.6 h4.4 v6.2 h1.4 v1.8 h-6 v-1.8 h1.4 v-4.4 h-1.2 z" fill="#fff"/></svg>
<div class="abs" style="left:113.7px;top:117px;line-height:48px;height:48px;font-family:'Liberation Serif', serif;font-size:21px;color:#2d2f52;white-space:nowrap">http.param</div>
<div class="abs" style="left:770px;width:566px;overflow:hidden;top:117px;line-height:48px;height:48px;font-family:'Liberation Serif', serif;font-size:21px;color:#111;white-space:nowrap">name=ABC</div>
<svg class="abs" style="left:64.4px;top:180px" width="18" height="17" viewBox="0 0 18 17"><defs><linearGradient id="mg" x1="0" y1="0" x2="0" y2="1"><stop offset="0" stop-color="#f4fbff"/><stop offset="1" stop-color="#d6ecf8"/></linearGradient></defs><rect x="0.9" y="0.9" width="16.2" height="15.2" fill="url(#mg)" stroke="#7b8894" stroke-width="1.8"/><rect x="4" y="7.3" width="10" height="2.2" fill="#2f6f9c"/></svg>
<div class="abs" style="left:86.9px;top:165px;line-height:48px;height:48px;font-family:'Liberation Serif', serif;font-size:21px;color:#111;white-space:nowrap">doGet(HttpServletRequest request, HttpServletResponse response)</div>
<div class="abs" style="left:1347px;top:165px;line-height:48px;height:48px;font-family:'Liberation Serif', serif;font-size:21px;color:#111;white-space:nowrap">14:53:36 654</div>
<div class="abs" style="right:1001px;top:165px;line-height:48px;height:48px;font-family:'Liberation Serif', serif;font-size:21px;color:#111;white-space:nowrap">0</div>
<div class="abs" style="right:865.5px;top:165px;line-height:48px;height:48px;font-family:'Liberation Serif', serif;font-size:21px;color:#111;white-space:nowrap">8</div>
<div class="abs" style="left:1790px;top:183.5px;width:81px;height:11.5px;border-radius:6px;background:#5bbede;overflow:hidden"><div style="width:20.5px;height:100%;background:#3f45c2;border-radius:6px 0 0 6px"></div></div>
<div class="abs" style="right:529px;top:165px;line-height:48px;height:48px;font-family:'Liberation Serif', serif;font-size:21px;color:#111;white-space:nowrap">2</div>
<div class="abs" style="left:2127px;top:165px;line-height:48px;height:48px;font-family:'Liberation Serif', serif;font-size:21px;color:#111;white-space:nowrap">FrameworkServlet</div>
<div class="abs" style="left:2357.5px;top:165px;line-height:48px;height:48px;font-family:'Liberation Serif', serif;font-size:21px;color:#111;white-space:nowrap">SPRING</div>
<div class="abs" style="left:2530px;width:106px;overflow:hidden;top:165px;line-height:48px;height:48px;font-family:'Liberation Serif', serif;font-size:21px;color:#111;white-space:nowrap">demo-consumer</div>
<svg class="abs" style="left:115.9px;top:227px" width="20" height="21" viewBox="0 0 20 21"><circle cx="10" cy="10.5" r="10" fill="#4d4f6c"/><path d="M8.3 4.6 h3 v2.6 h-3 z M7 8.6 h4.4 v6.2 h1.4 v1.8 h-6 v-1.8 h1.4 v-4.4 h-1.2 z" fill="#fff"/></svg>
<div class="abs" style="left:142.9px;top:213px;line-height:48px;height:48px;font-family:'Liberation Serif', serif;font-size:21px;color:#2d2f52;white-space:nowrap">NestedServletException</div>
<div class="abs" style="left:770px;width:566px;overflow:hidden;top:213px;line-height:48px;height:48px;font-family:'Liberation Serif', serif;font-size:21px;color:#111;white-space:nowrap">Request processing failed; nested exception is java.lang.RuntimeException</div>
<svg class="abs" style="left:93px;top:276px" width="18" height="17" viewBox="0 0 18 17"><defs><linearGradient id="mg" x1="0" y1="0" x2="0" y2="1"><stop offset="0" stop-color="#f4fbff"/><stop offset="1" stop-color="#d6ecf8"/></linearGradient></defs><rect x="0.9" y="0.9" width="16.2" height="15.2" fill="url(#mg)" stroke="#7b8894" stroke-width="1.8"/><rect x="4" y="7.3" width="10" height="2.2" fill="#2f6f9c"/></svg>
<div class="abs" style="left:115.5px;top:261px;line-height:48px;height:48px;font-family:'Liberation Serif', serif;font-size:21px;color:#111;white-space:nowrap">sayHello(String name)</div>
<div class="abs" style="left:1347px;top:261px;line-height:48px;height:48px;font-family:'Liberation Serif', serif;font-size:21px;color:#111;white-space:nowrap">14:53:36 655</div>
<div class="abs" style="right:1001px;top:261px;line-height:48px;height:48px;font-family:'Liberation Serif', serif;font-size:21px;color:#111;white-space:nowrap">1</div>
<div class="abs" style="right:865.5px;top:261px;line-height:48px;height:48px;font-family:'Liberation Serif', serif;font-size:21px;color:#111;white-space:nowrap">6</div>
<div class="abs" style="left:1790px;top:279.5px;width:62px;height:11.5px;border-radius:6px;background:#5bbede;overflow:hidden"><div style="width:0px;height:100%;background:#3f45c2;border-radius:6px 0 0 6px"></div></div>
<div class="abs" style="right:529px;top:261px;line-height:48px;height:48px;font-family:'Liberation Serif', serif;font-size:21px;color:#111;white-space:nowrap">0</div>
<div class="abs" style="left:2127px;top:261px;line-height:48px;height:48px;font-family:'Liberation Serif', serif;font-size:21px;color:#111;white-space:nowrap">DemoConsumerContr…</div>
<div class="abs" style="left:2357.5px;top:261px;line-height:48px;height:48px;font-family:'Liberation Serif', serif;font-size:21px;color:#111;white-space:nowrap">SPRING_BEAN</div>
<div class="abs" style="left:2530px;width:106px;overflow:hidden;top:261px;line-height:48px;height:48px;font-family:'Liberation Serif', serif;font-size:21px;color:#111;white-space:nowrap">demo-consumer</div>
<svg class="abs" style="left:144.4px;top:323px" width="20" height="21" viewBox="0 0 20 21"><circle cx="10" cy="10.5" r="10" fill="#4d4f6c"/><path d="M8.3 4.6 h3 v2.6 h-3 z M7 8.6 h4.4 v6.2 h1.4 v1.8 h-6 v-1.8 h1.4 v-4.4 h-1.2 z" fill="#fff"/></svg>
<div class="abs" style="left:171.4px;top:309px;line-height:48px;height:48px;font-family:'Liberation Serif', serif;font-size:21px;color:#2d2f52;white-space:nowrap">RuntimeException</div>
<div class="abs" style="left:770px;width:566px;overflow:hidden;top:309px;line-height:48px;height:48px;font-family:'Liberation Serif', serif;font-size:21px;color:#111;white-space:nowrap">ex</div>
<svg class="abs" style="left:122.2px;top:372px" width="18" height="17" viewBox="0 0 18 17"><defs><linearGradient id="mg" x1="0" y1="0" x2="0" y2="1"><stop offset="0" stop-color="#f4fbff"/><stop offset="1" stop-color="#d6ecf8"/></linearGradient></defs><rect x="0.9" y="0.9" width="16.2" height="15.2" fill="url(#mg)" stroke="#7b8894" stroke-width="1.8"/><rect x="4" y="7.3" width="10" height="2.2" fill="#2f6f9c"/></svg>
<div class="abs" style="left:144.7px;top:357px;line-height:48px;height:48px;font-family:'Liberation Serif', serif;font-size:21px;color:#111;white-space:nowrap">invoke(Invocation inv)</div>
<div class="abs" style="left:1347px;top:357px;line-height:48px;height:48px;font-family:'Liberation Serif', serif;font-size:21px;color:#111;white-space:nowrap">14:53:36 655</div>
<div class="abs" style="right:1001px;top:357px;line-height:48px;height:48px;font-family:'Liberation Serif', serif;font-size:21px;color:#111;white-space:nowrap">0</div>
<div class="abs" style="right:865.5px;top:357px;line-height:48px;height:48px;font-family:'Liberation Serif', serif;font-size:21px;color:#111;white-space:nowrap">6</div>
<div class="abs" style="left:1790px;top:375.5px;width:62px;height:11.5px;border-radius:6px;background:#5bbede;overflow:hidden"><div style="width:62px;height:100%;background:#3f45c2;border-radius:6px 0 0 6px"></div></div>
<div class="abs" style="right:529px;top:357px;line-height:48px;height:48px;font-family:'Liberation Serif', serif;font-size:21px;color:#111;white-space:nowrap">6</div>
<div class="abs" style="left:2127px;top:357px;line-height:48px;height:48px;font-family:'Liberation Serif', serif;font-size:21px;color:#111;white-space:nowrap">AbstractInvoker</div>
<div class="abs" style="left:2357.5px;top:357px;line-height:48px;height:48px;font-family:'Liberation Serif', serif;font-size:21px;color:#111;white-space:nowrap">DUBBO_CON…</div>
<div class="abs" style="left:2530px;width:106px;overflow:hidden;top:357px;line-height:48px;height:48px;font-family:'Liberation Serif', serif;font-size:21px;color:#111;white-space:nowrap">demo-consumer</div>
<svg class="abs" style="left:150.8px;top:420px" width="18" height="17" viewBox="0 0 18 17"><defs><linearGradient id="mg" x1="0" y1="0" x2="0" y2="1"><stop offset="0" stop-color="#f4fbff"/><stop offset="1" stop-color="#d6ecf8"/></linearGradient></defs><rect x="0.9" y="0.9" width="16.2" height="15.2" fill="url(#mg)" stroke="#7b8894" stroke-width="1.8"/><rect x="4" y="7.3" width="10" height="2.2" fill="#2f6f9c"/></svg>
<div class="abs" style="left:173.3px;top:405px;line-height:48px;height:48px;font-family:'Liberation Serif', serif;font-size:21px;color:#111;white-space:nowrap">invoke(Invocation invocation)</div>
<div class="abs" style="left:770px;width:566px;overflow:hidden;top:405px;line-height:48px;height:48px;font-family:'Liberation Serif', serif;font-size:21px;color:#111;white-space:nowrap">HelloService:sayHello</div>
<div class="abs" style="left:1347px;top:405px;line-height:48px;height:48px;font-family:'Liberation Serif', serif;font-size:21px;color:#111;white-space:nowrap">14:53:36 656</div>
<div class="abs" style="right:1001px;top:405px;line-height:48px;height:48px;font-family:'Liberation Serif', serif;font-size:21px;color:#111;white-space:nowrap">1</div>
<div class="abs" style="right:865.5px;top:405px;line-height:48px;height:48px;font-family:'Liberation Serif', serif;font-size:21px;color:#111;white-space:nowrap">1</div>
<div class="abs" style="left:1790px;top:423.5px;width:11.5px;height:11.5px;border-radius:6px;background:#5bbede;overflow:hidden"><div style="width:11.5px;height:100%;background:#3f45c2;border-radius:6px 0 0 6px"></div></div>
<div class="abs" style="right:529px;top:405px;line-height:48px;height:48px;font-family:'Liberation Serif', serif;font-size:21px;color:#111;white-space:nowrap">1</div>
<div class="abs" style="left:2127px;top:405px;line-height:48px;height:48px;font-family:'Liberation Serif', serif;font-size:21px;color:#111;white-space:nowrap">AbstractProxyInvoker</div>
<div class="abs" style="left:2357.5px;top:405px;line-height:48px;height:48px;font-family:'Liberation Serif', serif;font-size:21px;color:#111;white-space:nowrap">DUBBO_PRO…</div>
<div class="abs" style="left:2530px;width:106px;overflow:hidden;top:405px;line-height:48px;height:48px;font-family:'Liberation Serif', serif;font-size:21px;color:#111;white-space:nowrap">demo-provider</div>
<svg class="abs" style="left:202.2px;top:467px" width="20" height="21" viewBox="0 0 20 21"><circle cx="10" cy="10.5" r="10" fill="#4d4f6c"/><path d="M8.3 4.6 h3 v2.6 h-3 z M7 8.6 h4.4 v6.2 h1.4 v1.8 h-6 v-1.8 h1.4 v-4.4 h-1.2 z" fill="#fff"/></svg>
<div class="abs" style="left:229.2px;top:453px;line-height:48px;height:48px;font-family:'Liberation Serif', serif;font-size:21px;color:#2d2f52;white-space:nowrap">REMOTE_ADDRESS</div>
<div class="abs" style="left:770px;width:566px;overflow:hidden;top:453px;line-height:48px;height:48px;font-family:'Liberation Serif', serif;font-size:21px;color:#111;white-space:nowrap">192.168.93.10:60788</div>
<div class="abs" style="left:89.0px;top:501px;line-height:48px;height:48px;font-family:'Liberation Serif', serif;font-size:21px;color:#111;white-space:nowrap">doGet(HttpServletRequest request, HttpServletResponse response)</div>
<div class="abs" style="left:1347px;top:501px;line-height:48px;height:48px;font-family:'Liberation Serif', serif;font-size:21px;color:#111;white-space:nowrap">14:53:36 666</div>
<div class="abs" style="right:1001px;top:501px;line-height:48px;height:48px;font-family:'Liberation Serif', serif;font-size:21px;color:#111;white-space:nowrap">4</div>
<div class="abs" style="right:865.5px;top:501px;line-height:48px;height:48px;font-family:'Liberation Serif', serif;font-size:21px;color:#111;white-space:nowrap">4</div>
<div class="abs" style="left:1790px;top:519.5px;width:30px;height:11.5px;border-radius:6px;background:#5bbede;overflow:hidden"><div style="width:30px;height:100%;background:#3f45c2;border-radius:6px 0 0 6px"></div></div>
<div class="abs" style="right:529px;top:501px;line-height:48px;height:48px;font-family:'Liberation Serif', serif;font-size:21px;color:#111;white-space:nowrap">4</div>
<div class="abs" style="left:2127px;top:501px;line-height:48px;height:48px;font-family:'Liberation Serif', serif;font-size:21px;color:#111;white-space:nowrap">FrameworkServlet</div>
<div class="abs" style="left:2357.5px;top:501px;line-height:48px;height:48px;font-family:'Liberation Serif', serif;font-size:21px;color:#111;white-space:nowrap">SPRING</div>
<div class="abs" style="left:2530px;width:106px;overflow:hidden;top:501px;line-height:48px;height:48px;font-family:'Liberation Serif', serif;font-size:21px;color:#111;white-space:nowrap">demo-consumer</div>
</div>
<div class="abs" style="left:2636px;top:1018px;width:24px;height:520px;background:#f3f3f3;border-left:1px solid #e6e6e6"></div>
<div class="abs" style="left:2644px;top:1092px;width:15px;height:418px;border-radius:8px;background:#b9b9b9"></div>
<div class="abs" style="left:0;top:1538px;width:2660px;height:24px;background:#f4f4f4;border-top:2px solid #e2e2e2"></div>
<div class="abs" style="left:0;top:1546px;width:2264px;height:16px;border-radius:8px 8px 0 8px;background:#c1c1c1"></div>
<div class="abs" style="left:1497px;top:1009px;width:238px;height:43px;background:#fff;border-radius:6px"></div>
<div class="abs" style="left:1532px;top:992.5px;line-height:60px;font-size:36px;color:#ec4425;white-space:nowrap">Time exec</div>
<svg class="abs" style="left:0;top:0" width="2660" height="1562" viewBox="0 0 2660 1562"><g fill="#f6461f"><circle cx="1699" cy="1055.5" r="2.1"/><polygon points="1699.6,1053.5 1781,1078.7 1782,1072.3 1795.3,1088.5 1774.2,1093.7 1777,1089.5 1698.4,1057.5"/><circle cx="470.4" cy="1274.8" r="2.9"/><polygon points="468.9,1272.3 375.3,1319.3 373.2,1309.3 357.3,1338.5 390.2,1340.3 383.8,1332.7 472,1277.3"/></g></svg>
<div class="abs" style="left:482px;top:1217.5px;line-height:60px;font-size:36px;color:#ec4425;white-space:nowrap">Exception</div>
</body></html>
